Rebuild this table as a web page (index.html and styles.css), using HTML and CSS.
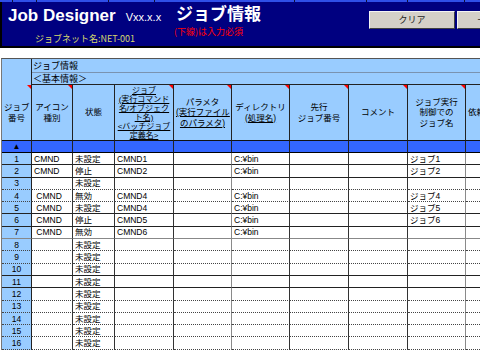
FILE: index.html
```html
<!DOCTYPE html>
<html lang="ja">
<head>
<meta charset="utf-8">
<title>Job Designer - ジョブ情報</title>
<link rel="stylesheet" href="styles.css">
</head>
<body>
<div class="strip"><span class="s1"></span><span class="s2"></span><span class="s3"></span><span class="s4"></span><span class="s5"></span><span class="s6"></span><span class="s7"></span><span class="s8"></span><span class="s9"></span></div>
<header class="band">
  <div class="brand">
    <div class="brand-line"><span class="app">Job Designer</span><span class="ver">Vxx.x.x</span></div>
    <div class="net">ジョブネット名:NET-001</div>
  </div>
  <div class="title">
    <div class="title-main">ジョブ情報</div>
    <div class="title-note">(下線)は入力必須</div>
  </div>
  <div class="actions">
    <button class="btn">クリア</button>
    <button class="btn">一覧へ戻る</button>
  </div>
</header>

<table class="grid">
  <colgroup>
    <col class="c0"><col class="c1"><col class="c2"><col class="c3"><col class="c4"><col class="c5"><col class="c6"><col class="c7"><col class="c8"><col class="c9">
  </colgroup>
  <tbody>
    <tr class="r-a">
      <td class="corner" rowspan="2"></td>
      <td class="sec" colspan="9">ジョブ情報</td>
    </tr>
    <tr class="r-b">
      <td class="sub" colspan="9">＜基本情報＞</td>
    </tr>
    <tr class="r-h">
      <th class="mark">ジョブ<br>番号</th>
      <th class="mark">アイコン<br>種別</th>
      <th>状態</th>
      <th class="mark tight"><span class="u">ジョブ<br>(実行コマンド<br>名/オブジェク<br>ト名)<br>&lt;バッチジョブ<br>定義名&gt;</span></th>
      <th class="mark">パラメタ<br><span class="u">(実行ファイル<br>のパラメタ)</span></th>
      <th class="mark">ディレクトリ<br><span class="u">(処理名)</span></th>
      <th class="mark">先行<br>ジョブ番号</th>
      <th class="mark">コメント</th>
      <th class="mark">ジョブ実行<br>制御での<br>ジョブ名</th>
      <th class="left">依頼元ホスト名</th>
    </tr>
    <tr class="r-tri">
      <td class="tri">▲</td><td></td><td></td><td></td><td></td><td></td><td></td><td></td><td></td><td></td>
    </tr>
  </tbody>
  <tbody class="data">
    <tr class="s"><td class="num">1</td><td>CMND</td><td>未設定</td><td>CMND1</td><td></td><td>C:¥bin</td><td></td><td></td><td>ジョブ1</td><td></td></tr>
    <tr class="s"><td class="num">2</td><td>CMND</td><td>停止</td><td>CMND2</td><td></td><td>C:¥bin</td><td></td><td></td><td>ジョブ2</td><td></td></tr>
    <tr><td class="num">3</td><td></td><td>未設定</td><td></td><td></td><td></td><td></td><td></td><td></td><td></td></tr>
    <tr><td class="num">4</td><td>&nbsp;CMND</td><td>無効</td><td>CMND4</td><td></td><td>C:¥bin</td><td></td><td></td><td>ジョブ4</td><td></td></tr>
    <tr class="s"><td class="num">5</td><td>&nbsp;CMND</td><td>未設定</td><td>CMND4</td><td></td><td>C:¥bin</td><td></td><td></td><td>ジョブ5</td><td></td></tr>
    <tr class="s"><td class="num">6</td><td>&nbsp;CMND</td><td>停止</td><td>CMND5</td><td></td><td>C:¥bin</td><td></td><td></td><td>ジョブ6</td><td></td></tr>
    <tr class="g"><td class="num">7</td><td>&nbsp;CMND</td><td>無効</td><td>CMND6</td><td></td><td>C:¥bin</td><td></td><td></td><td></td><td></td></tr>
    <tr><td class="num">8</td><td></td><td>未設定</td><td></td><td></td><td></td><td></td><td></td><td></td><td></td></tr>
    <tr><td class="num">9</td><td></td><td>未設定</td><td></td><td></td><td></td><td></td><td></td><td></td><td></td></tr>
    <tr class="s"><td class="num">10</td><td></td><td>未設定</td><td></td><td></td><td></td><td></td><td></td><td></td><td></td></tr>
    <tr class="s"><td class="num">11</td><td></td><td>未設定</td><td></td><td></td><td></td><td></td><td></td><td></td><td></td></tr>
    <tr><td class="num">12</td><td></td><td>未設定</td><td></td><td></td><td></td><td></td><td></td><td></td><td></td></tr>
    <tr><td class="num">13</td><td></td><td>未設定</td><td></td><td></td><td></td><td></td><td></td><td></td><td></td></tr>
    <tr><td class="num">14</td><td></td><td>未設定</td><td></td><td></td><td></td><td></td><td></td><td></td><td></td></tr>
    <tr><td class="num">15</td><td></td><td>未設定</td><td></td><td></td><td></td><td></td><td></td><td></td><td></td></tr>
    <tr><td class="num">16</td><td></td><td>未設定</td><td></td><td></td><td></td><td></td><td></td><td></td><td></td></tr>
  </tbody>
</table>
</body>
</html>
```
FILE: styles.css
```css
* { box-sizing: border-box; }

html, body {
  margin: 0;
  width: 480px;
  height: 352px;
  overflow: hidden;
  background: #fff;
}

body {
  font-family: "Liberation Sans", "Noto Sans CJK JP", sans-serif;
  color: #000;
}

/* thin strip at very top */
.strip {
  display: flex;
  height: 2px;
  background: #2f4fe8;
}
.strip span { flex: none; height: 2px; border-right: 1px solid #101030; }
.strip .s1 { width: 13px; }
.strip .s2 { width: 24px; }
.strip .s3 { width: 72px; }
.strip .s4 { width: 46px; }
.strip .s5 { width: 140px; }
.strip .s6 { width: 72px; }
.strip .s7 { width: 41px; }
.strip .s8 { width: 57px; }
.strip .s9 { width: 20px; border-right: 0; }

/* navy title band */
.band {
  display: flex;
  height: 46px;
  background: #000080;
  border-left: 2px solid #000;
  border-bottom: 2px solid #000;
}

.brand {
  flex: none;
  width: 172px;
  padding: 4px 0 0 6px;
}

.brand-line {
  height: 20px;
  line-height: 20px;
  white-space: nowrap;
}

.app {
  font: bold 17px "Liberation Sans", sans-serif;
  color: #fff;
}

.ver {
  font: 11px "Liberation Sans", sans-serif;
  color: #fff;
  margin-left: 10px;
}

.net {
  margin-top: 7px;
  padding-left: 27px;
  font: 9px/11px "Noto Sans CJK JP", sans-serif;
  color: #d6d66e;
  white-space: nowrap;
}

.title {
  flex: none;
  width: 195px;
  padding-top: 2px;
}

.title-main {
  height: 18px;
  padding-left: 2px;
  font: bold 17px/18px "Noto Sans CJK JP", sans-serif;
  color: #fff;
}

.title-main,
.title-note { white-space: nowrap; }

.title-note {
  margin-top: 4px;
  font: 9px/11px "Noto Sans CJK JP", sans-serif;
  color: #ff0000;
}

.actions {
  flex: none;
  display: flex;
  gap: 2px;
  padding-top: 9px;
}

.btn {
  flex: none;
  width: 86px;
  height: 18px;
  padding: 0;
  background: #d4d0c8;
  border: 1px solid;
  border-color: #f4f4f4 #404040 #404040 #f4f4f4;
  font: 9px/16px "Noto Sans CJK JP", sans-serif;
  color: #222;
  text-align: center;
  white-space: nowrap;
}

/* sheet grid */
.grid {
  table-layout: fixed;
  border-collapse: separate;
  border-spacing: 0;
  width: 522px;
  margin: 10px 0 0 1px;
  border-top: 1px solid #555;
  border-left: 1px solid #777;
}

.c0 { width: 30px; }
.c1 { width: 41px; }
.c2 { width: 42px; }
.c3 { width: 59px; }
.c4 { width: 58px; }
.c5 { width: 58px; }
.c6 { width: 59px; }
.c7 { width: 59px; }
.c8 { width: 58px; }
.c9 { width: 58px; }

.grid td,
.grid th {
  padding: 0 2px;
  border-right: 1px solid #333;
  border-bottom: 1px solid #333;
  font-size: 8.5px;
  line-height: 10px;
  font-weight: normal;
  white-space: nowrap;
  overflow: hidden;
  text-align: left;
  vertical-align: middle;
}

.r-a { height: 14px; }
.r-b { height: 12px; }
.r-h { height: 56px; }
.r-tri { height: 12px; }

.r-a td, .r-b td { background: #99ccff; }
.grid .corner { border-bottom: none; border-right-color: #222; }
.grid .sec { font-size: 9px; border-bottom-color: #7a93b0; padding-left: 1px; }
.grid .sub { font-size: 9px; border-bottom-color: #222; padding-left: 1px; }

.r-h th {
  position: relative;
  background: #99ccff;
  text-align: center;
  line-height: 10.5px;
  border-bottom-color: #111;
  border-right-color: #222;
}
.r-h th.tight { font-size: 8px; line-height: 9px; }
.r-h th.left { text-align: left; overflow: visible; }

.u { text-decoration: underline; }

.mark::after {
  content: "";
  position: absolute;
  top: 0;
  right: 0;
  width: 0;
  height: 0;
  border-top: 4px solid #ff0000;
  border-left: 4px solid transparent;
}

.r-tri td {
  background: #3366ff;
  border-bottom-color: #000;
  border-right-color: #222;
}
.grid .tri { text-align: center; font-size: 8px; }

.data tr { height: 12.3px; }
.data td {
  border-bottom: 1px dotted #444;
  border-right-color: #333;
  padding-left: 2px;
}
.data tr.s td { border-bottom: 1px solid #222; }
.data tr.g td { border-bottom: 1px solid #888; }
.data td:nth-child(5),
.data td:nth-child(9),
.data td:nth-child(10) { border-right-color: #8a8a8a; }

.grid .num {
  background: #99ccff;
  text-align: center;
  border-right-color: #222;
}
```
